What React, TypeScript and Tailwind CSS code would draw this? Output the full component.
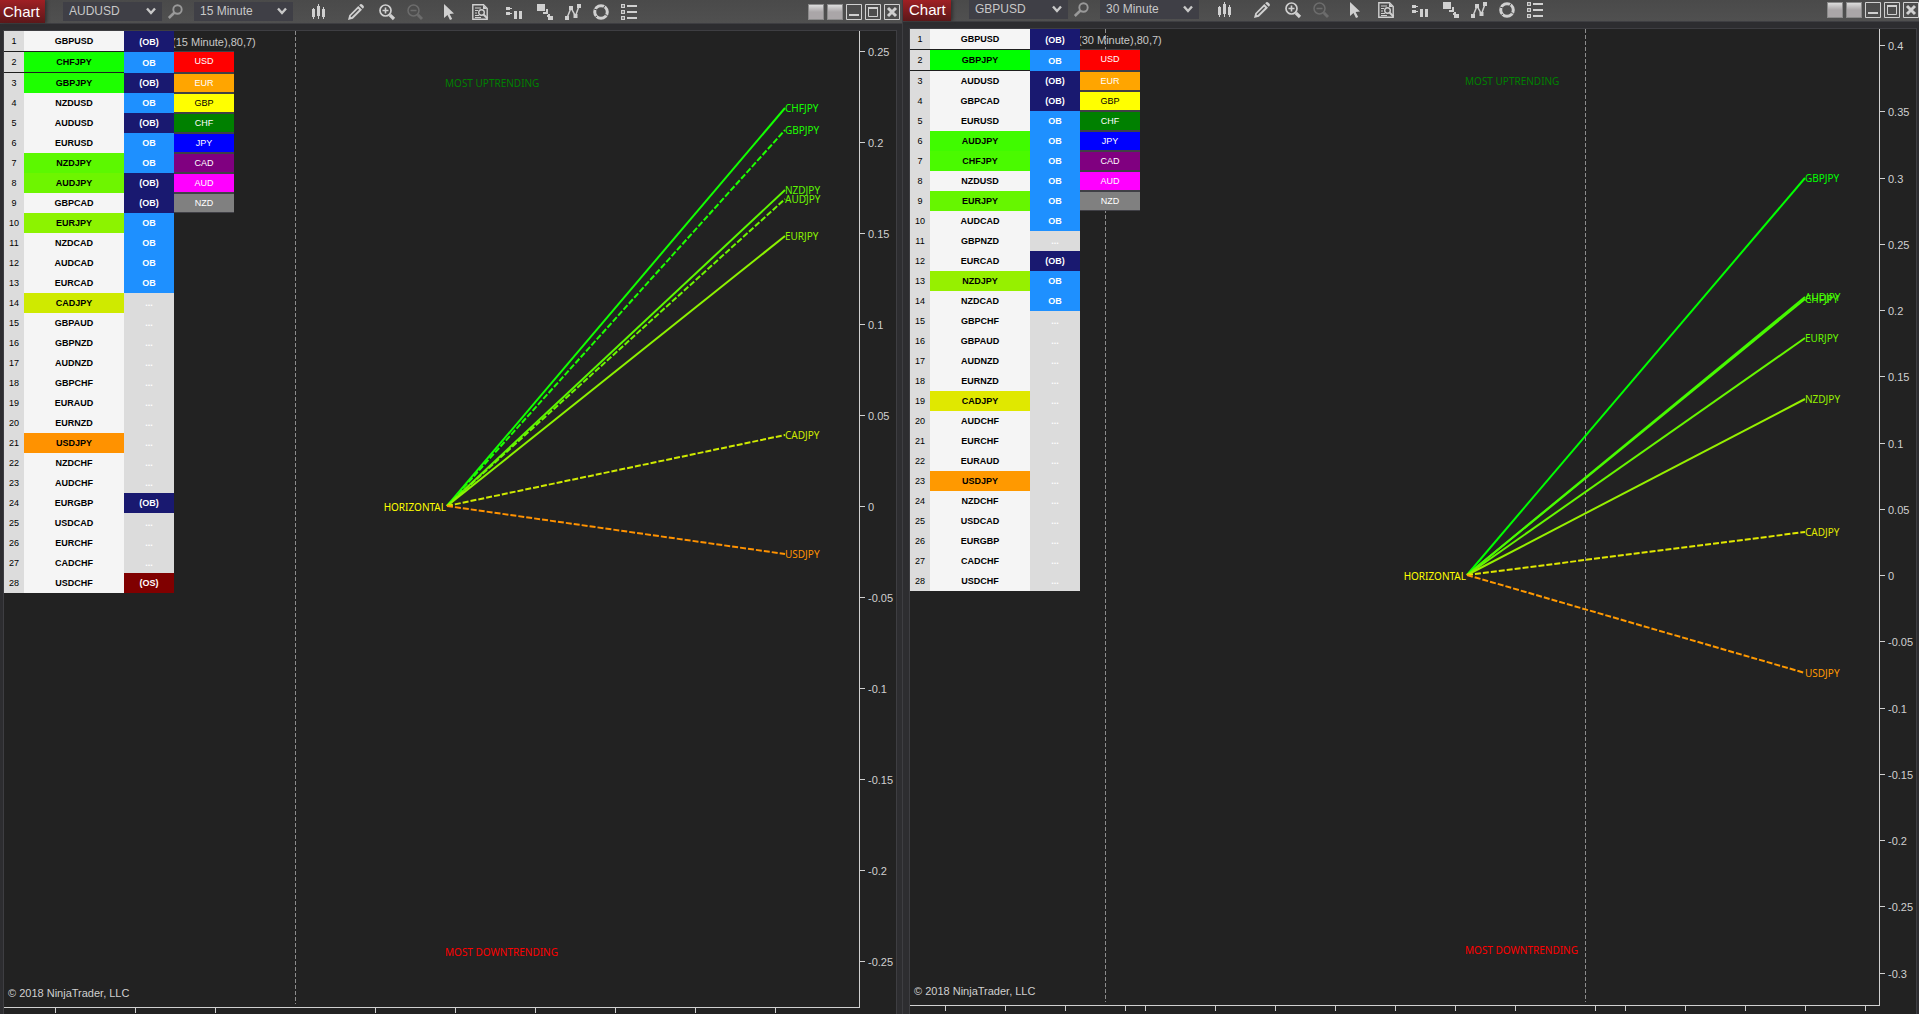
import { type ReactNode } from 'react'

type Row = [pair: string, state: string, color?: string]

type Ray = {
  pair: string
  y: number
  color: string
  dashed?: boolean
}

type ChartData = {
  symbol: string
  interval: string
  rows: Row[]
  rays: Ray[]
  origin: number
  zero: number
  perUnit: number
  prices: number[]
  sessions: number[]
  times: number[]
}

const audusd: ChartData = {
  symbol: 'AUDUSD',
  interval: '15 Minute',
  rows: [
    ['GBPUSD', '(OB)'],
    ['CHFJPY', 'OB', '#12ff00'],
    ['GBPJPY', '(OB)', '#1eff00'],
    ['NZDUSD', 'OB'],
    ['AUDUSD', '(OB)'],
    ['EURUSD', 'OB'],
    ['NZDJPY', 'OB', '#5cf800'],
    ['AUDJPY', '(OB)', '#6ef500'],
    ['GBPCAD', '(OB)'],
    ['EURJPY', 'OB', '#8cf300'],
    ['NZDCAD', 'OB'],
    ['AUDCAD', 'OB'],
    ['EURCAD', 'OB'],
    ['CADJPY', '...', '#cfea00'],
    ['GBPAUD', '...'],
    ['GBPNZD', '...'],
    ['AUDNZD', '...'],
    ['GBPCHF', '...'],
    ['EURAUD', '...'],
    ['EURNZD', '...'],
    ['USDJPY', '...', '#ff9200'],
    ['NZDCHF', '...'],
    ['AUDCHF', '...'],
    ['EURGBP', '(OB)'],
    ['USDCAD', '...'],
    ['EURCHF', '...'],
    ['CADCHF', '...'],
    ['USDCHF', '(OS)'],
  ],
  rays: [
    { pair: 'CHFJPY', y: 77, color: '#12ff00' },
    { pair: 'GBPJPY', y: 99, color: '#1eff00', dashed: true },
    { pair: 'NZDJPY', y: 159, color: '#5cf800' },
    { pair: 'AUDJPY', y: 168, color: '#6ef500', dashed: true },
    { pair: 'EURJPY', y: 205, color: '#8cf300' },
    { pair: 'CADJPY', y: 404, color: '#cfea00', dashed: true },
    { pair: 'USDJPY', y: 523, color: '#ff9200', dashed: true },
  ],
  origin: 443,
  zero: 475,
  perUnit: 1820,
  prices: [0.25, 0.2, 0.15, 0.1, 0.05, 0, -0.05, -0.1, -0.15, -0.2, -0.25],
  sessions: [291],
  times: [51, 131, 211, 371, 451, 531, 611, 691, 771],
}

const gbpusd: ChartData = {
  symbol: 'GBPUSD',
  interval: '30 Minute',
  rows: [
    ['GBPUSD', '(OB)'],
    ['GBPJPY', 'OB', '#00ff00'],
    ['AUDUSD', '(OB)'],
    ['GBPCAD', '(OB)'],
    ['EURUSD', 'OB'],
    ['AUDJPY', 'OB', '#40fb00'],
    ['CHFJPY', 'OB', '#4afa00'],
    ['NZDUSD', 'OB'],
    ['EURJPY', 'OB', '#66f600'],
    ['AUDCAD', 'OB'],
    ['GBPNZD', '...'],
    ['EURCAD', '(OB)'],
    ['NZDJPY', 'OB', '#96f000'],
    ['NZDCAD', 'OB'],
    ['GBPCHF', '...'],
    ['GBPAUD', '...'],
    ['AUDNZD', '...'],
    ['EURNZD', '...'],
    ['CADJPY', '...', '#e0e800'],
    ['AUDCHF', '...'],
    ['EURCHF', '...'],
    ['EURAUD', '...'],
    ['USDJPY', '...', '#ff9900'],
    ['NZDCHF', '...'],
    ['USDCAD', '...'],
    ['EURGBP', '...'],
    ['CADCHF', '...'],
    ['USDCHF', '...'],
  ],
  rays: [
    { pair: 'GBPJPY', y: 149, color: '#00ff00' },
    { pair: 'AUDJPY', y: 268, color: '#40fb00' },
    { pair: 'CHFJPY', y: 270, color: '#4afa00' },
    { pair: 'EURJPY', y: 309, color: '#66f600' },
    { pair: 'NZDJPY', y: 370, color: '#96f000' },
    { pair: 'CADJPY', y: 503, color: '#e0e800', dashed: true },
    { pair: 'USDJPY', y: 644, color: '#ff9900', dashed: true },
  ],
  origin: 557,
  zero: 546,
  perUnit: 1325,
  prices: [0.4, 0.35, 0.3, 0.25, 0.2, 0.15, 0.1, 0.05, 0, -0.05, -0.1, -0.15, -0.2, -0.25, -0.3],
  sessions: [195, 675],
  times: [35, 95, 155, 215, 235, 305, 365, 425, 485, 545, 605, 685, 715, 775, 835, 895, 955],
}

const currencies = [
  ['USD', 'h-[21px] border-t bg-[#ff0000] text-white'],
  ['EUR', 'h-5 border-t-2 bg-[#ffa500] text-white'],
  ['GBP', 'h-5 border-t-2 bg-[#ffff00] text-black'],
  ['CHF', 'h-5 border-t-2 bg-[#008000] text-white'],
  ['JPY', 'h-5 border-t-2 bg-[#0000ff] text-white'],
  ['CAD', 'h-5 border-t-2 bg-[#800080] text-white'],
  ['AUD', 'h-5 border-t-2 bg-[#ff00ff] text-white'],
  ['NZD', 'h-[21px] border-t-2 border-b bg-[#808080] text-white'],
]

const stateStyles: Record<string, string> = {
  '(OB)': 'bg-[#191970]',
  OB: 'bg-[#1e90ff]',
  '(OS)': 'bg-[#800000]',
  '...': 'bg-[#dcdcdc]',
}

/* Toolbar icons, all on a 16px grid */
const icons: { label: string; className: string; art: ReactNode }[] = [
  {
    label: 'Chart style',
    className: 'ml-[17px]',
    art: (
      <path d="M3 4h1v1h1v8H4v2H3v-2H2V5h1zM8 0h1v2h1v10H9v3H8v-3H7V2h1zM13 3h1v2h1v8h-1v2h-1v-2h-1V5h1z" />
    ),
  },
  {
    label: 'Drawing tools',
    className: 'ml-[22px]',
    art: (
      <>
        <path d="M0 16l1.2-4.8L10.3 2l3.7 3.7-9.1 9.1zM11.2 1.2 12.2.3q1-.6 2 .2l1.3 1.3q.8 1 .2 2l-.9 1z" />
        <path d="M3 12.8 10.6 5.2" stroke="#4e4e4e" strokeWidth="1.4" />
      </>
    ),
  },
  {
    label: 'Zoom in',
    className: 'ml-[15px]',
    art: (
      <>
        <circle cx="6.5" cy="6.5" r="5.5" fill="none" stroke="currentColor" strokeWidth="1.7" />
        <path d="M3.5 6.5h6M6.5 3.5v6" stroke="currentColor" strokeWidth="1.6" />
        <path d="M10.8 10.8 15 15" stroke="currentColor" strokeWidth="3.2" />
      </>
    ),
  },
  {
    label: 'Zoom out',
    className: 'ml-3 text-[#6c6c6c]',
    art: (
      <>
        <circle cx="6.5" cy="6.5" r="5.5" fill="none" stroke="currentColor" strokeWidth="1.5" />
        <path d="M3.5 6.5h6" stroke="currentColor" strokeWidth="1.5" />
        <path d="M10.8 10.8 15 15" stroke="currentColor" strokeWidth="3" />
      </>
    ),
  },
  {
    label: 'Cursor',
    className: 'ml-[17px]',
    art: <path d="M4 0l10 9.500-4.400.5 2.600 5-2.200 1-2.500-5L4 14z" />,
  },
  {
    label: 'Data box',
    className: 'ml-4',
    art: (
      <>
        <path d="M11.5.8H.8v14.400h14.400V4.500z" fill="none" stroke="currentColor" strokeWidth="1.4" />
        <path d="M11 1l4 4h-4z" />
        <path d="M3 4h6M3 6.500h3M3 9h2M3 11.500h4M3 13.500h6" stroke="currentColor" />
        <circle cx="9.5" cy="8.5" r="2.8" fill="none" stroke="currentColor" strokeWidth="1.4" />
        <path d="M11.500 10.500l4 4" stroke="currentColor" strokeWidth="2" />
      </>
    ),
  },
  {
    label: 'Chart trader',
    className: 'ml-[18px]',
    art: <path d="M0 3h4v1h2v1H4v1H0zM0 8h4v1h2v1H4v1H0zM8 7h3v8H8zM13 7h3v8h-3z" />,
  },
  {
    label: 'Strategies',
    className: 'ml-[15px]',
    art: <path d="M0 0h8v7H0zM9 5h2v5H6V8h3zM11 10h2v2h3v4h-5v-3h-1v-2h1z" />,
  },
  {
    label: 'Indicators',
    className: 'ml-3',
    art: (
      <>
        <path d="M2 14 6 4l4.500 8L14 2" fill="none" stroke="currentColor" strokeWidth="1.5" />
        <path d="M0 12h4v4H0zM4 2h4v4H4zM8.500 10h4v4h-4zM12 0h4v4h-4z" />
      </>
    ),
  },
  {
    label: 'Reload',
    className: 'ml-3',
    art: (
      <>
        <circle cx="8" cy="8" r="6.3" fill="none" stroke="currentColor" strokeWidth="3" />
        <path d="M12 1.500 10.500 4M14.500 11.500 12 10.500M2 13.500 4 12M1 5l3 1" stroke="#4e4e4e" />
      </>
    ),
  },
  {
    label: 'Properties',
    className: 'ml-3',
    art: (
      <>
        <path d="M.6.600h2.800v2.800H.6zM.6 6.600h2.800v2.800H.6zM.6 12.600h2.800v2.800H.6z" fill="none" stroke="currentColor" strokeWidth="1.2" />
        <path d="M6 1h10v2H6zM6 7h10v2H6zM6 13h10v2H6z" />
      </>
    ),
  },
]

function Icon({ children }: { children: ReactNode }) {
  return (
    <svg viewBox="0 0 16 16" className="block size-4 overflow-visible" fill="currentColor" aria-hidden="true">
      {children}
    </svg>
  )
}

function Dropdown({ label, value, className }: { label: string; value: string; className: string }) {
  return (
    <div className={`relative h-[19px] w-[99px] shrink-0 ${className}`}>
      <select
        aria-label={label}
        defaultValue={value}
        className="block h-full w-full appearance-none bg-[#3f3f46] pl-1.5 text-xs leading-[19px] text-[#c8c8c8] outline-none"
      >
        <option>{value}</option>
      </select>
      <svg viewBox="0 0 10 8" className="pointer-events-none absolute top-[5px] right-1.5 h-2 w-2.5" aria-hidden="true">
        <path d="M1 1.500 5 6l4-4.500" fill="none" stroke="#c8c8c8" strokeWidth="2.4" />
      </svg>
    </div>
  )
}

function Toolbar({ symbol, interval, className, tab }: { symbol: string; interval: string; className: string; tab: string }) {
  return (
    <header
      className={`flex shrink-0 border-b border-[#3e3e42] bg-linear-to-b from-[#4a4a4a] to-[#505050] text-[#d0d0d0] ${className}`}
    >
      <h1 className={`bg-linear-to-b from-[#a01f24] to-[#5c1719] text-[15px] text-white shadow-[2px_0_3px_#333] ${tab}`}>
        Chart
      </h1>
      <div className="flex h-[19px] flex-1 items-center">
        <Dropdown label="Instrument" value={symbol} className="ml-[18px]" />
        <button type="button" aria-label="Search" className="ml-[5px] text-[#999]">
          <Icon>
            <circle cx="10.5" cy="5.5" r="4.2" fill="none" stroke="currentColor" strokeWidth="1.9" />
            <path d="M7.500 8.500 1.800 14" stroke="currentColor" strokeWidth="2.6" />
          </Icon>
        </button>
        <Dropdown label="Interval" value={interval} className="ml-[11px]" />
        {icons.map((icon) => (
          <button key={icon.label} type="button" aria-label={icon.label} className={icon.className}>
            <Icon>{icon.art}</Icon>
          </button>
        ))}

        {/* Window controls */}
        <div className="ml-auto flex gap-[3px] pt-px">
          <button type="button" aria-label="Link instrument" className="size-4 border border-[#8a8a8a] bg-linear-to-b from-[#dcdcdc] to-[#aaa6a8] to-50%" />
          <button type="button" aria-label="Link interval" className="size-4 border border-[#8a8a8a] bg-linear-to-b from-[#dcdcdc] to-[#aaa6a8] to-50%" />
          <button type="button" aria-label="Minimize" className="size-4">
            <Icon>
              <path d="M.5.500h15v15H.5z" fill="none" stroke="currentColor" />
              <path d="M3 10h10v2H3z" />
            </Icon>
          </button>
          <button type="button" aria-label="Maximize" className="size-4">
            <Icon>
              <path d="M.5.500h15v15H.5zM3.500 3.500h9v9h-9z" fill="none" stroke="currentColor" />
              <path d="M3 3h10v2H3z" />
            </Icon>
          </button>
          <button type="button" aria-label="Close" className="size-4">
            <Icon>
              <path d="M.5.500h15v15H.5z" fill="none" stroke="currentColor" />
              <path d="M4 4l8 8M12 4l-8 8" stroke="currentColor" strokeWidth="3" />
            </Icon>
          </button>
        </div>
      </div>
    </header>
  )
}

function RankTable({ rows }: { rows: Row[] }) {
  return (
    <table className="relative z-10 w-[170px] shrink-0 table-fixed border-separate border-spacing-0 text-center text-[9px] leading-[20px]">
      <colgroup>
        <col className="w-5" />
        <col className="w-[100px]" />
        <col className="w-[50px]" />
      </colgroup>
      <tbody>
        {rows.map(([pair, state, color], i) => {
          const line = i < 2 ? 'border-b border-[#1e1e1e]' : ''
          return (
            <tr key={pair}>
              <td className={`bg-[#dcdcdc] p-0 text-black ${line}`}>{i + 1}</td>
              <td className={`bg-[#f5f5f5] p-0 font-bold text-black ${line}`} style={{ backgroundColor: color }}>
                {pair}
              </td>
              <td className={`p-0 font-bold text-white ${stateStyles[state]}`}>{state}</td>
            </tr>
          )
        })}
      </tbody>
    </table>
  )
}

function Fan({ data }: { data: ChartData }) {
  const { origin, zero } = data
  const end = origin + 338
  return (
    <svg className="absolute inset-0 h-full w-full font-['Noto_Sans',sans-serif] text-[10px]">
      {data.sessions.map((x) => (
        <line key={x} x1={x + 0.5} x2={x + 0.5} y1="0" y2="973" stroke="#8c8c8c" strokeDasharray="4 2" />
      ))}
      <text x={origin - 2} y="56" fill="#008000">MOST UPTRENDING</text>
      <text x={origin - 2} y="925" fill="#ff0000">MOST DOWNTRENDING</text>
      {data.rays.map((ray) => (
        <g key={ray.pair}>
          <line
            x1={origin}
            y1={zero}
            x2={end}
            y2={ray.y}
            stroke={ray.color}
            strokeWidth="2"
            strokeDasharray={ray.dashed ? '6 2' : undefined}
          />
          <text x={end} y={ray.y + 4} fill={ray.color}>{ray.pair}</text>
        </g>
      ))}
      <text x={origin - 1} y={zero + 5} textAnchor="end" fill="#ffff00">HORIZONTAL</text>
    </svg>
  )
}

function Plot({ data, time }: { data: ChartData; time: string }) {
  return (
    <div className="flex flex-1 flex-col">
      <div className="flex flex-1">
        <div className="relative flex flex-1 flex-col justify-between">
          <Fan data={data} />
          <div className="relative flex items-start">
            <RankTable rows={data.rows} />
            <div className="text-[9px]">
              <p className="-ml-0.5 h-5 pt-px text-[11px] leading-5 whitespace-nowrap text-[#c8c8c8]">({data.interval}),80,7)</p>
              <ul className="w-[60px] text-center leading-[18px]">
                {currencies.map(([name, className]) => (
                  <li key={name} className={`border-[#404046] ${className}`}>{name}</li>
                ))}
              </ul>
            </div>
          </div>
          <p className="relative pb-1.5 pl-1 text-[11px] leading-4 text-[#d0d0d0]">© 2018 NinjaTrader, LLC</p>
        </div>

        {/* Price axis */}
        <svg className="w-[37px] shrink-0 border-l border-[#d0d0d0] text-[11px]" fill="#d0d0d0">
          {data.prices.map((price) => {
            const y = Math.round(data.zero - price * data.perUnit)
            return (
              <g key={price}>
                <rect y={y} width="5" height="1" />
                <text x="8" y={y + 5}>{price}</text>
              </g>
            )
          })}
        </svg>
      </div>

      {/* Time axis */}
      <svg className={`mr-9 shrink-0 border-t border-[#d0d0d0] ${time}`} fill="#d0d0d0">
        {data.times.map((x) => (
          <rect key={x} x={x} width="1" height="5" />
        ))}
      </svg>
    </div>
  )
}

export default function App() {
  return (
    <main className="grid min-h-screen grid-cols-[902fr_1017fr] bg-[#2d2d30] font-['Liberation_Sans',Arial,sans-serif]">
      <section className="flex flex-col overflow-hidden">
        <Toolbar symbol={audusd.symbol} interval={audusd.interval} className="h-6 items-center pr-0.5" tab="w-[45px] self-stretch pl-[3px] leading-6" />
        <div className="mt-1.5 mr-[5px] ml-[3px] flex flex-1 border border-b-0 border-[#3e3e42] bg-[#222]">
          <Plot data={audusd} time="h-[7px]" />
        </div>
      </section>
      <section className="flex flex-col overflow-hidden border-l border-[#3e3e42]">
        <Toolbar symbol={gbpusd.symbol} interval={gbpusd.interval} className="h-[22px] items-start" tab="w-[48px] self-stretch pl-1.5 leading-5" />
        <div className="mt-1.5 mr-0.5 ml-1.5 flex flex-1 border border-b-0 border-[#3e3e42] bg-[#222]">
          <Plot data={gbpusd} time="h-[9px]" />
        </div>
      </section>
    </main>
  )
}
